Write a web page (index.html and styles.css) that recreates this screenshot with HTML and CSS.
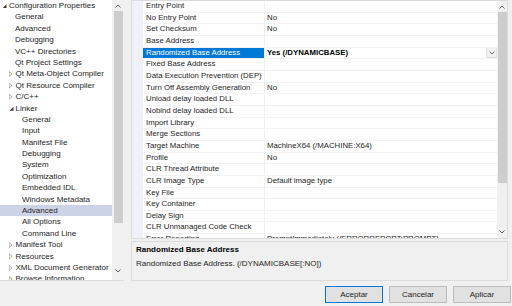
FILE: index.html
```html
<!DOCTYPE html>
<html lang="en">
<head>
    <meta charset="UTF-8">
    <title>Linker Advanced</title>
    <link rel="stylesheet" href="styles.css">
</head>
<body>
    <div class="main">
        <div class="tree">
            <div class="tree-list">
                <div class="node l0"><span class="exp open"></span>Configuration Properties</div>
                <div class="node l1"><span class="exp"></span>General</div>
                <div class="node l1"><span class="exp"></span>Advanced</div>
                <div class="node l1"><span class="exp"></span>Debugging</div>
                <div class="node l1"><span class="exp"></span>VC++ Directories</div>
                <div class="node l1"><span class="exp"></span>Qt Project Settings</div>
                <div class="node l0"><span class="exp closed"></span>Qt Meta-Object Compiler</div>
                <div class="node l0"><span class="exp closed"></span>Qt Resource Compiler</div>
                <div class="node l0"><span class="exp closed"></span>C/C++</div>
                <div class="node l0 sub"><span class="exp open"></span>Linker</div>
                <div class="node l2"><span class="exp"></span>General</div>
                <div class="node l2"><span class="exp"></span>Input</div>
                <div class="node l2"><span class="exp"></span>Manifest File</div>
                <div class="node l2"><span class="exp"></span>Debugging</div>
                <div class="node l2"><span class="exp"></span>System</div>
                <div class="node l2"><span class="exp"></span>Optimization</div>
                <div class="node l2"><span class="exp"></span>Embedded IDL</div>
                <div class="node l2"><span class="exp"></span>Windows Metadata</div>
                <div class="node l2 active"><span class="exp"></span>Advanced</div>
                <div class="node l2"><span class="exp"></span>All Options</div>
                <div class="node l2"><span class="exp"></span>Command Line</div>
                <div class="node l0"><span class="exp closed"></span>Manifest Tool</div>
                <div class="node l0"><span class="exp closed"></span>Resources</div>
                <div class="node l0"><span class="exp closed"></span>XML Document Generator</div>
                <div class="node l0"><span class="exp closed"></span>Browse Information</div>
            </div>
            <div class="vscroll tree-scroll">
                <div class="arrow"><svg width="6" height="4" viewBox="0 0 6 4"><path d="M0.5 3.5 L3 1 L5.5 3.5" fill="none" stroke="#606060"/></svg></div>
                <div class="thumb"></div>
                <div class="spacer"></div>
                <div class="arrow down"><svg width="6" height="4" viewBox="0 0 6 4"><path d="M0.5 0.5 L3 3 L5.5 0.5" fill="none" stroke="#606060"/></svg></div>
            </div>
        </div>

        <div class="right">
            <div class="grid">
                <div class="gutter"></div>
                <div class="rows">
                    <div class="row"><div class="name">Entry Point</div><div class="value"></div></div>
                    <div class="row"><div class="name">No Entry Point</div><div class="value">No</div></div>
                    <div class="row"><div class="name">Set Checksum</div><div class="value">No</div></div>
                    <div class="row"><div class="name">Base Address</div><div class="value"></div></div>
                    <div class="row sel">
                        <div class="name">Randomized Base Address</div>
                        <div class="value"><span>Yes (/DYNAMICBASE)</span>
                            <span class="dd"><svg width="6" height="4" viewBox="0 0 6 4"><path d="M0.5 0.5 L3 3 L5.5 0.5" fill="none" stroke="#707070"/></svg></span>
                        </div>
                    </div>
                    <div class="row"><div class="name">Fixed Base Address</div><div class="value"></div></div>
                    <div class="row"><div class="name">Data Execution Prevention (DEP)</div><div class="value"></div></div>
                    <div class="row"><div class="name">Turn Off Assembly Generation</div><div class="value">No</div></div>
                    <div class="row"><div class="name">Unload delay loaded DLL</div><div class="value"></div></div>
                    <div class="row"><div class="name">Nobind delay loaded DLL</div><div class="value"></div></div>
                    <div class="row"><div class="name">Import Library</div><div class="value"></div></div>
                    <div class="row"><div class="name">Merge Sections</div><div class="value"></div></div>
                    <div class="row"><div class="name">Target Machine</div><div class="value">MachineX64 (/MACHINE:X64)</div></div>
                    <div class="row"><div class="name">Profile</div><div class="value">No</div></div>
                    <div class="row"><div class="name">CLR Thread Attribute</div><div class="value"></div></div>
                    <div class="row"><div class="name">CLR Image Type</div><div class="value">Default image type</div></div>
                    <div class="row"><div class="name">Key File</div><div class="value"></div></div>
                    <div class="row"><div class="name">Key Container</div><div class="value"></div></div>
                    <div class="row"><div class="name">Delay Sign</div><div class="value"></div></div>
                    <div class="row"><div class="name">CLR Unmanaged Code Check</div><div class="value"></div></div>
                    <div class="row"><div class="name">Error Reporting</div><div class="value">PromptImmediately (/ERRORREPORT:PROMPT)</div></div>
                </div>
                <div class="vscroll grid-scroll">
                    <div class="arrow"><svg width="6" height="4" viewBox="0 0 6 4"><path d="M0.5 3.5 L3 1 L5.5 3.5" fill="none" stroke="#606060"/></svg></div>
                    <div class="thumb"></div>
                    <div class="spacer"></div>
                    <div class="arrow down"><svg width="6" height="4" viewBox="0 0 6 4"><path d="M0.5 0.5 L3 3 L5.5 0.5" fill="none" stroke="#606060"/></svg></div>
                </div>
            </div>
            <div class="desc">
                <div class="desc-title">Randomized Base Address</div>
                <div class="desc-text">Randomized Base Address. (/DYNAMICBASE[:NO])</div>
            </div>
        </div>
        <div class="edge"></div>
    </div>

    <div class="buttons">
        <button class="btn default">Aceptar</button>
        <button class="btn">Cancelar</button>
        <button class="btn">Aplicar</button>
    </div>
</body>
</html>
```

FILE: styles.css
```css
* {
    box-sizing: border-box;
}

html, body {
    margin: 0;
}

body {
    width: 512px;
    height: 306px;
    overflow: hidden;
    background: #f0f0f0;
    font-family: "Segoe UI", "Liberation Sans", Arial, sans-serif;
    font-size: 8px;
    color: #1e1e1e;
}

.main {
    display: flex;
    height: 281px;
}

/* left tree */
.tree {
    width: 124px;
    height: 281px;
    display: flex;
    background: #fff;
    border-bottom: 1px solid #dcdcdc;
}

.tree-list {
    width: 112px;
    overflow: hidden;
}

.node {
    height: 11.4px;
    line-height: 11.4px;
    display: flex;
    align-items: center;
    white-space: nowrap;
}

.node.l0 { padding-left: 2.5px; }
.node.l1 { padding-left: 8.5px; }
.node.l2 { padding-left: 15.5px; }
.node.l0 .exp.closed { margin-left: 6px; margin-right: 0.5px; }
.node.l0.sub .exp.open { margin-left: 7px; margin-right: -0.5px; }

.node.active {
    background: #cdd3e6;
}

.exp {
    width: 6.5px;
    height: 7px;
    flex: none;
    position: relative;
}

.exp.open::before {
    content: "";
    position: absolute;
    left: 0;
    top: 2px;
    width: 4px;
    height: 4px;
    background: #3c3c3c;
    clip-path: polygon(100% 0, 100% 100%, 0 100%);
}

.exp.closed::before {
    content: "";
    position: absolute;
    left: 0;
    top: 0;
    width: 4px;
    height: 7px;
    background: #a0a0a0;
    clip-path: polygon(0 0, 100% 50%, 0 100%, 0 0, 1px 1.6px, 1px 5.4px, 2.8px 3.5px, 1px 1.6px);
}

/* scrollbars */
.vscroll {
    display: flex;
    flex-direction: column;
    align-items: center;
    background: #f0f0f0;
}

.arrow {
    height: 11px;
    display: flex;
    align-items: center;
    justify-content: center;
    flex: none;
}

.arrow svg {
    display: block;
}

.thumb {
    width: 9px;
    background: #cdcdcd;
    flex: none;
}

.spacer {
    flex: 1;
}

.tree-scroll {
    width: 12px;
}

.tree-scroll .thumb {
    height: 212px;
}

.tree-scroll .arrow.down {
    margin-bottom: 4px;
}

/* right side */
.right {
    margin-left: 7px;
    width: 377px;
    display: flex;
    flex-direction: column;
}

.grid {
    height: 239px;
    display: flex;
    background: #fff;
    border: 1px solid #dcdcdc;
}

.gutter {
    width: 11px;
    background: #eef1f8;
    flex: none;
}

.rows {
    flex: 1;
    overflow: hidden;
}

.row {
    height: 11.67px;
    display: flex;
    border-bottom: 1px solid #f2f2f2;
    line-height: 10.67px;
    font-size: 7.8px;
    white-space: nowrap;
}

.name {
    width: 122px;
    flex: none;
    padding-left: 3px;
    border-right: 1px solid #f0f0f0;
    overflow: hidden;
}

.value {
    flex: 1;
    padding-left: 2px;
    display: flex;
    justify-content: space-between;
    overflow: hidden;
}

.row.sel .name {
    background: #0078d7;
    color: #fff;
}

.row.sel .value {
    font-weight: bold;
    color: #000;
}

.dd {
    width: 11px;
    height: 11px;
    margin-top: -0.5px;
    background: #f0f0f0;
    border: 1px solid #e0e0e0;
    display: flex;
    align-items: center;
    justify-content: center;
}

.grid-scroll {
    width: 10px;
    flex: none;
}

.grid-scroll .thumb {
    height: 171px;
}

.grid-scroll .arrow.down {
    margin-bottom: 1px;
}

.desc {
    margin-top: 2px;
    height: 40px;
    border: 1px solid #dcdcdc;
    padding: 2px 4px 0;
    line-height: 11px;
}

.desc-title {
    font-weight: bold;
    color: #000;
}

.desc-text {
    margin-top: 3px;
}

.edge {
    flex: 1;
}

/* dialog buttons */
.buttons {
    display: flex;
    justify-content: flex-end;
    gap: 6px;
    padding-right: 1px;
    margin-top: 5px;
}

.btn {
    width: 58px;
    height: 17px;
    margin: 0;
    padding: 0;
    background: #e1e1e1;
    border: 1px solid #bcbcbc;
    font-family: inherit;
    font-size: 8px;
    color: #1e1e1e;
}

.btn.default {
    border-color: #0078d7;
}
```
